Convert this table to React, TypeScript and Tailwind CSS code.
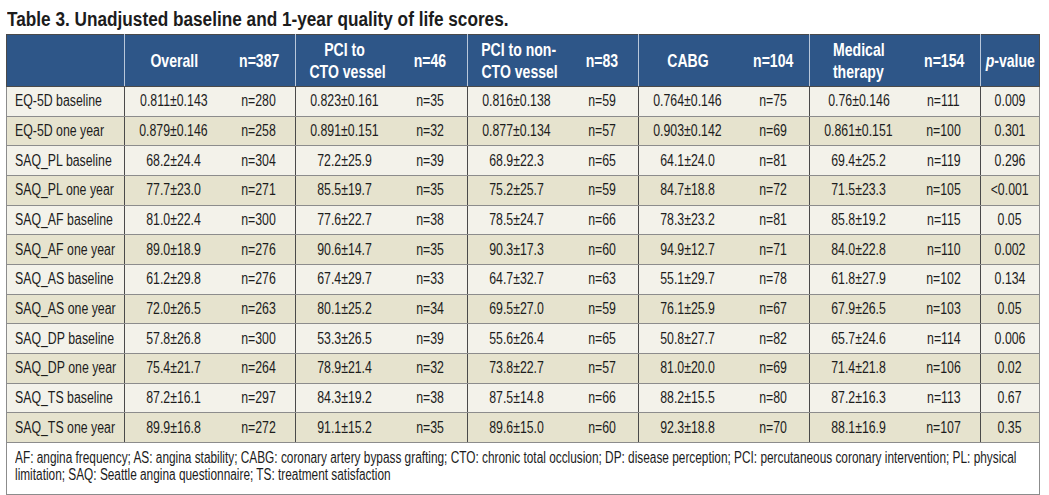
import React from 'react';

type Row = [string, string, string, string, string, string, string, string, string, string, string, string];

const rows: Row[] = [
  ['EQ-5D baseline', '0.811±0.143', 'n=280', '0.823±0.161', 'n=35', '0.816±0.138', 'n=59', '0.764±0.146', 'n=75', '0.76±0.146', 'n=111', '0.009'],
  ['EQ-5D one year', '0.879±0.146', 'n=258', '0.891±0.151', 'n=32', '0.877±0.134', 'n=57', '0.903±0.142', 'n=69', '0.861±0.151', 'n=100', '0.301'],
  ['SAQ_PL baseline', '68.2±24.4', 'n=304', '72.2±25.9', 'n=39', '68.9±22.3', 'n=65', '64.1±24.0', 'n=81', '69.4±25.2', 'n=119', '0.296'],
  ['SAQ_PL one year', '77.7±23.0', 'n=271', '85.5±19.7', 'n=35', '75.2±25.7', 'n=59', '84.7±18.8', 'n=72', '71.5±23.3', 'n=105', '<0.001'],
  ['SAQ_AF baseline', '81.0±22.4', 'n=300', '77.6±22.7', 'n=38', '78.5±24.7', 'n=66', '78.3±23.2', 'n=81', '85.8±19.2', 'n=115', '0.05'],
  ['SAQ_AF one year', '89.0±18.9', 'n=276', '90.6±14.7', 'n=35', '90.3±17.3', 'n=60', '94.9±12.7', 'n=71', '84.0±22.8', 'n=110', '0.002'],
  ['SAQ_AS baseline', '61.2±29.8', 'n=276', '67.4±29.7', 'n=33', '64.7±32.7', 'n=63', '55.1±29.7', 'n=78', '61.8±27.9', 'n=102', '0.134'],
  ['SAQ_AS one year', '72.0±26.5', 'n=263', '80.1±25.2', 'n=34', '69.5±27.0', 'n=59', '76.1±25.9', 'n=67', '67.9±26.5', 'n=103', '0.05'],
  ['SAQ_DP baseline', '57.8±26.8', 'n=300', '53.3±26.5', 'n=39', '55.6±26.4', 'n=65', '50.8±27.7', 'n=82', '65.7±24.6', 'n=114', '0.006'],
  ['SAQ_DP one year', '75.4±21.7', 'n=264', '78.9±21.4', 'n=32', '73.8±22.7', 'n=57', '81.0±20.0', 'n=69', '71.4±21.8', 'n=106', '0.02'],
  ['SAQ_TS baseline', '87.2±16.1', 'n=297', '84.3±19.2', 'n=38', '87.5±14.8', 'n=66', '88.2±15.5', 'n=80', '87.2±16.3', 'n=113', '0.67'],
  ['SAQ_TS one year', '89.9±16.8', 'n=272', '91.1±15.2', 'n=35', '89.6±15.0', 'n=60', '92.3±18.8', 'n=70', '88.1±16.9', 'n=107', '0.35'],
];

const groups = [
  { label: ['Overall'], n: 'n=387' },
  { label: ['PCI to', 'CTO vessel'], n: 'n=46' },
  { label: ['PCI to non-', 'CTO vessel'], n: 'n=83' },
  { label: ['CABG'], n: 'n=104' },
  { label: ['Medical', 'therapy'], n: 'n=154' },
];

// the journal face is a condensed grotesque; squeeze Liberation Sans to match
const Narrow = ({
  children,
  className = 'scale-x-[0.77] origin-center',
}: {
  children: React.ReactNode;
  className?: string;
}) => <span className={`inline-block whitespace-nowrap ${className}`}>{children}</span>;

export default function App() {
  return (
    <div className="bg-white w-[1049px] h-[495px] pl-[6px] pt-[7px] text-[#1c1c1c] font-['Liberation_Sans',Arial,sans-serif]">
      <h1 className="text-[20px] font-bold leading-[24px] pl-[1px] mb-[3px] whitespace-nowrap">
        <Narrow className="scale-x-[0.86] origin-left">
          Table 3. Unadjusted baseline and 1-year quality of life scores.
        </Narrow>
      </h1>
      <table className="border-collapse table-fixed w-[1033px] text-[16px]">
        <colgroup>
          <col className="w-[118px]" />
          <col className="w-[98px]" />
          <col className="w-[73px]" />
          <col className="w-[98px]" />
          <col className="w-[74px]" />
          <col className="w-[98px]" />
          <col className="w-[73px]" />
          <col className="w-[98px]" />
          <col className="w-[73px]" />
          <col className="w-[98px]" />
          <col className="w-[73px]" />
          <col className="w-[59px]" />
        </colgroup>
        <thead>
          <tr className="bg-[#2e5688] text-white h-[52px] text-[19px] font-bold leading-[22px]">
            <th className="border border-[#4a4a4a] border-r-[#b9c7da]"></th>
            {groups.map((g, i) => (
              <React.Fragment key={i}>
                <th className="border-y border-[#4a4a4a] text-center">
                  {g.label.map((l, j) => (
                    <div key={j}>
                      <Narrow className="scale-x-[0.74] origin-center">{l}</Narrow>
                    </div>
                  ))}
                </th>
                <th className="border-y border-r border-[#4a4a4a] border-r-[#b9c7da] text-center">
                  <Narrow className="scale-x-[0.74] origin-center">{g.n}</Narrow>
                </th>
              </React.Fragment>
            ))}
            <th className="border border-[#4a4a4a] text-left">
              <Narrow className="scale-x-[0.74] origin-center -ml-[4px]">
                <i>p</i>-value
              </Narrow>
            </th>
          </tr>
        </thead>
        <tbody>
          {rows.map((r, i) => (
            <tr key={i} className={`h-[29.67px] ${i % 2 === 0 ? 'bg-[#f3f2ea]' : 'bg-[#e6e3ce]'}`}>
              <td className="border border-[#8c8c8c] border-r-[#4a4a4a] pl-[8px]">
                <Narrow className="scale-x-[0.77] origin-left">{r[0]}</Narrow>
              </td>
              {r.slice(1, 11).map((c, j) => (
                <td
                  key={j}
                  className={`border-y border-[#8c8c8c] text-center ${j % 2 === 1 ? 'border-r border-r-[#4a4a4a]' : ''}`}
                >
                  <Narrow>{c}</Narrow>
                </td>
              ))}
              <td className="border border-[#8c8c8c] text-center">
                <Narrow>{r[11]}</Narrow>
              </td>
            </tr>
          ))}
          <tr className="bg-white">
            <td colSpan={12} className="border border-[#8c8c8c] pl-[8px] pt-[6px] pb-[11px] text-[16px] leading-[17px] overflow-hidden">
              <div className="w-[1360px] origin-left scale-x-[0.74] whitespace-nowrap">
                AF: angina frequency; AS: angina stability; CABG: coronary artery bypass grafting; CTO: chronic total occlusion; DP: disease perception; PCI: percutaneous coronary intervention; PL: physical
                <br />
                limitation; SAQ: Seattle angina questionnaire; TS: treatment satisfaction
              </div>
            </td>
          </tr>
        </tbody>
      </table>
    </div>
  );
}
